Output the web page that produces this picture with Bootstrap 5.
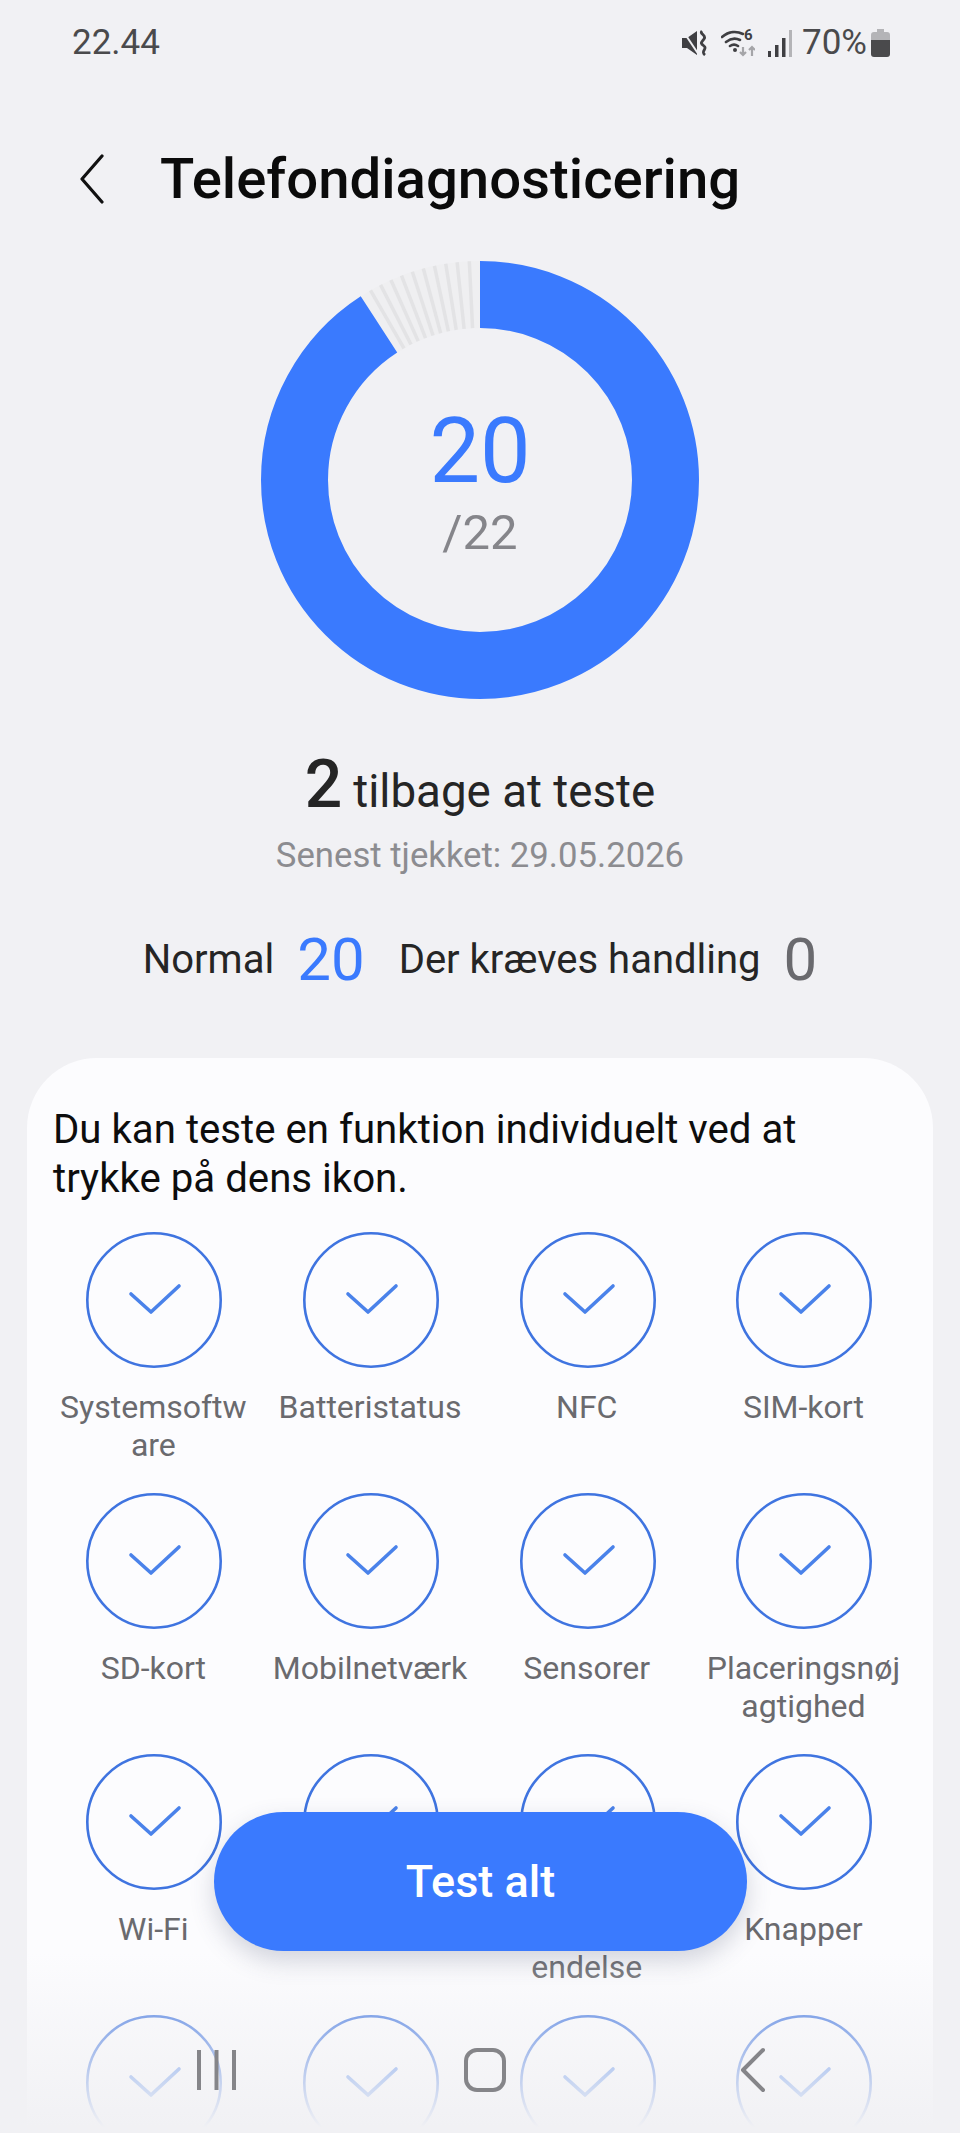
<!DOCTYPE html>
<html lang="da">
<head>
    <meta charset="UTF-8">
    <meta name="viewport" content="width=device-width, initial-scale=1.0">
    <title>Telefondiagnosticering</title>
    <link href="https://cdn.jsdelivr.net/npm/bootstrap@5.3.0/dist/css/bootstrap.min.css" rel="stylesheet">
    <style>
        body {
            background: #f1f1f4;
            font-family: Roboto, "Liberation Sans", sans-serif;
            color: #252525;
        }
        .screen { width: 960px; height: 2133px; overflow: hidden; position: relative; }
        .status-row { height: 64px; padding: 22px 70px 0 72px; color: #4a4a4c; font-size: 35px; line-height: 42px; }
        .status-pct { margin-left: 10px; margin-right: 4px; }
        .status-gap { margin-right: 13px; }
        .wifi-box { position: relative; width: 34px; height: 28px; }
        .wifi-num { position: absolute; left: 23px; top: -3px; font-size: 15px; line-height: 18px; font-weight: 700; color: #3f3f42; }
        .title-row { height: 80px; margin-top: 75px; padding-left: 76px; gap: 50px; }
        .page-title { font-size: 56.3px; font-weight: 500; color: #0b0b0b; line-height: 80px; margin: 0; }
        .donut-box { width: 440px; height: 440px; margin: 41px auto 0; position: relative; }
        .donut-num { position: absolute; inset: 0; }
        .done-num { font-size: 90px; font-weight: 400; color: #3a7afe; line-height: 88px; margin-top: 148px; }
        .total-num { font-size: 49px; font-weight: 400; color: #85858a; line-height: 60px; margin-top: 7px; }
        .left-row { margin-top: 45px; line-height: 80px; font-size: 45.7px; }
        .left-big { font-size: 66px; font-weight: 500; margin-right: 11px; }
        .checked-row { font-size: 34.7px; color: #8c8c90; line-height: 44px; margin-top: 1px; }
        .count-row { margin-top: 43px; height: 80px; gap: 34px; font-size: 40px; }
        .count-num { font-size: 60px; font-weight: 400; margin-left: 23px; }
        .num-blue { color: #3a7afe; }
        .num-grey { color: #6a6a6e; }
        .tests-card { margin: 58px 27px 0; height: 1200px; background: #fcfcfe; border-radius: 70px; padding: 48px 19px 0; }
        .tests-text { font-size: 40.2px; line-height: 48.5px; color: #0d0d0d; margin: 0 7px 29px; }
        .tests-grid { display: grid; grid-template-columns: repeat(4, 216.7px); grid-auto-rows: 261px; }
        .test-item { text-align: center; padding: 0 11px; }
        .test-ring { width: 136px; height: 136px; display: block; margin: 0 auto; }
        .test-name { font-size: 32px; line-height: 38px; color: #6a6a6e; margin: 20px 0 0 -2px; overflow-wrap: anywhere; }
        .test-all { position: absolute; left: 214px; top: 1812px; width: 533px; height: 139px; border: 0; border-radius: 70px; background: #3a7afe; color: #fff; font-size: 45px; font-weight: 500; box-shadow: 0 10px 24px rgba(60, 70, 100, .22); }
        .bottom-fade { position: absolute; left: 0; right: 0; bottom: 0; height: 180px; background: linear-gradient(to bottom, rgba(241,241,244,0), rgba(241,241,244,.4) 35%, rgba(241,241,244,1) 97%); }
        .nav-icons { position: absolute; left: 0; top: 2040px; }
    </style>
</head>
<body>
<div class="screen">
    <!-- статус бар -->
    <div class="status-row d-flex align-items-center justify-content-between">
        <span>22.44</span>
        <div class="d-flex align-items-center">
            <svg width="26" height="26" viewBox="0 0 26 26" class="status-gap">
                <path d="M0 8h5l10-7v24L5 18H0z" fill="#3f3f42"/>
                <path d="M1 1l16 24" stroke="#f1f1f4" stroke-width="2"/>
                <path d="M20 1c-3 3 5 4 2 8s-4 4 0 7-4 5 1 9" fill="none" stroke="#3f3f42" stroke-width="2.8"/>
            </svg>
            <div class="wifi-box status-gap">
                <svg width="34" height="28" viewBox="0 0 34 28" class="d-block">
                    <path d="M1 8c7-6 15-6 21-3M5 13c5-4 10-4 14-2M9 17c3-2 5-2 8 0" fill="none" stroke="#3f3f42" stroke-width="2.6" stroke-linecap="round"/>
                    <circle cx="14" cy="21" r="2" fill="#3f3f42"/>
                    <path d="M22 18v8m-3-3l3 3 3-3" fill="none" stroke="#a5a5a8" stroke-width="2.2"/>
                    <path d="M31 27v-9m-3 3l3-3 3 3" fill="none" stroke="#a5a5a8" stroke-width="2.2"/>
                </svg>
                <span class="wifi-num">6</span>
            </div>
            <svg width="24" height="27" viewBox="0 0 24 27">
                <rect x="0" y="21" width="3" height="6" fill="#3f3f42"/>
                <rect x="7" y="15" width="3.5" height="12" fill="#3f3f42"/>
                <rect x="14" y="8" width="3.5" height="19" fill="#3f3f42"/>
                <rect x="21" y="0" width="3" height="27" fill="#b4b4b7"/>
            </svg>
            <span class="status-pct">70%</span>
            <svg width="19" height="28" viewBox="0 0 19 28">
                <path d="M6 0h7v3h3a3 3 0 0 1 3 3v5H0V6a3 3 0 0 1 3-3h3z" fill="#b4b4b7"/>
                <path d="M0 11h19v14a3 3 0 0 1-3 3H3a3 3 0 0 1-3-3z" fill="#4a4a4c"/>
            </svg>
        </div>
    </div>

    <!-- заголовок -->
    <div class="title-row d-flex align-items-center">
        <svg width="34" height="50" viewBox="0 0 34 50">
            <path d="M26 2L6 25l20 23" fill="none" stroke="#111" stroke-width="3.2" stroke-linecap="round" stroke-linejoin="round"/>
        </svg>
        <h1 class="page-title">Telefondiagnosticering</h1>
    </div>

    <!-- диаграмма -->
    <div class="donut-box">
        <svg width="440" height="440" viewBox="-220 -220 440 440">
            <circle r="185.5" fill="none" stroke="#efeff1" stroke-width="67"/>
            <g stroke="#e3e3e5" stroke-width="3.5">
                <line y1="-152" y2="-219" transform="rotate(-2.8)"/>
                <line y1="-152" y2="-219" transform="rotate(-6)"/>
                <line y1="-152" y2="-219" transform="rotate(-9)"/>
                <line y1="-152" y2="-219" transform="rotate(-12)"/>
                <line y1="-152" y2="-219" transform="rotate(-15)"/>
                <line y1="-152" y2="-219" transform="rotate(-18)"/>
                <line y1="-152" y2="-219" transform="rotate(-21)"/>
                <line y1="-152" y2="-219" transform="rotate(-24)"/>
                <line y1="-152" y2="-219" transform="rotate(-27)"/>
                <line y1="-152" y2="-219" transform="rotate(-30)"/>
            </g>
            <circle r="185.5" fill="none" stroke="#3a7afe" stroke-width="67" pathLength="360" stroke-dasharray="327 33" transform="rotate(-90)"/>
        </svg>
        <div class="donut-num text-center">
            <div class="done-num">20</div>
            <div class="total-num">/22</div>
        </div>
    </div>

    <div class="left-row text-center"><span class="left-big">2</span>tilbage at teste</div>
    <div class="checked-row text-center">Senest tjekket: 29.05.2026</div>

    <div class="count-row d-flex justify-content-center align-items-center">
        <div class="d-flex align-items-center">Normal<span class="count-num num-blue">20</span></div>
        <div class="d-flex align-items-center">Der kræves handling<span class="count-num num-grey">0</span></div>
    </div>

    <!-- карточка с тестами -->
    <div class="tests-card">
        <p class="tests-text">Du kan teste en funktion individuelt ved at trykke på dens ikon.</p>
        <svg width="0" height="0" class="position-absolute">
            <symbol id="ring" viewBox="0 0 136 136">
                <circle cx="68" cy="68" r="66.7" fill="none" stroke="#3f74e0" stroke-width="2.6"/>
                <path d="M45 62l20 18 28-26" fill="none" stroke="#4a82ea" stroke-width="3.6" stroke-linecap="round" stroke-linejoin="round"/>
            </symbol>
        </svg>
        <div class="tests-grid">
            <div class="test-item"><svg class="test-ring"><use href="#ring"/></svg><div class="test-name">Systemsoftware</div></div>
            <div class="test-item"><svg class="test-ring"><use href="#ring"/></svg><div class="test-name">Batteristatus</div></div>
            <div class="test-item"><svg class="test-ring"><use href="#ring"/></svg><div class="test-name">NFC</div></div>
            <div class="test-item"><svg class="test-ring"><use href="#ring"/></svg><div class="test-name">SIM-kort</div></div>
            <div class="test-item"><svg class="test-ring"><use href="#ring"/></svg><div class="test-name">SD-kort</div></div>
            <div class="test-item"><svg class="test-ring"><use href="#ring"/></svg><div class="test-name">Mobilnetværk</div></div>
            <div class="test-item"><svg class="test-ring"><use href="#ring"/></svg><div class="test-name">Sensorer</div></div>
            <div class="test-item"><svg class="test-ring"><use href="#ring"/></svg><div class="test-name">Placeringsnøjagtighed</div></div>
            <div class="test-item"><svg class="test-ring"><use href="#ring"/></svg><div class="test-name">Wi-Fi</div></div>
            <div class="test-item"><svg class="test-ring"><use href="#ring"/></svg><div class="test-name">Bluetooth</div></div>
            <div class="test-item"><svg class="test-ring"><use href="#ring"/></svg><div class="test-name">Signalafs endelse</div></div>
            <div class="test-item"><svg class="test-ring"><use href="#ring"/></svg><div class="test-name">Knapper</div></div>
            <div class="test-item"><svg class="test-ring"><use href="#ring"/></svg></div>
            <div class="test-item"><svg class="test-ring"><use href="#ring"/></svg></div>
            <div class="test-item"><svg class="test-ring"><use href="#ring"/></svg></div>
            <div class="test-item"><svg class="test-ring"><use href="#ring"/></svg></div>
        </div>
    </div>

    <div class="bottom-fade"></div>
    <button type="button" class="btn test-all">Test alt</button>

    <!-- навигация андроид -->
    <svg class="nav-icons" width="960" height="60" viewBox="0 0 960 60">
        <g fill="none" stroke="#858589" stroke-width="4">
            <path d="M199 10v40M216.500 10v40M234 10v40"/>
            <rect x="466" y="10" width="38" height="40" rx="11"/>
            <path d="M763 10l-20 20 20 20" stroke-linecap="round" stroke-linejoin="round"/>
        </g>
    </svg>
</div>
<script src="https://cdn.jsdelivr.net/npm/bootstrap@5.3.0/dist/js/bootstrap.bundle.min.js"></script>
</body>
</html>
